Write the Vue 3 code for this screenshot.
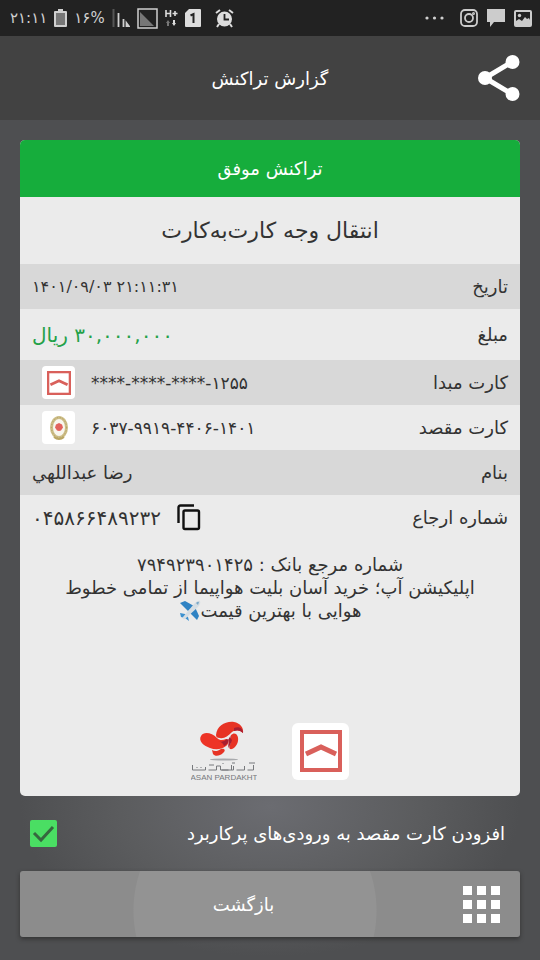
<script setup>
import { ref } from 'vue'

const addToFrequent = ref(true)

const rows = [
  { label: 'تاریخ', value: '۱۴۰۱/۰۹/۰۳ ۲۱:۱۱:۳۱', kind: 'date' },
  { label: 'مبلغ', value: '۳۰,۰۰۰,۰۰۰ ریال', kind: 'amount' },
  { label: 'کارت مبدا', value: '****-****-****-۱۲۵۵', bank: 'tejarat' },
  { label: 'کارت مقصد', value: '۶۰۳۷-۹۹۱۹-۴۴۰۶-۱۴۰۱', bank: 'melli' },
  { label: 'بنام', value: 'رضا عبداللهي', kind: 'name' },
  { label: 'شماره ارجاع', value: '۰۴۵۸۶۶۴۸۹۲۳۲', kind: 'reference', copy: true },
]

const tiles = [0, 1, 2, 3, 4, 5, 6, 7, 8]
</script>

<template>
  <div class="screen" dir="rtl">
    <div class="status" dir="ltr">
      <div class="status-side">
        <span>۲۱:۱۱</span>
        <svg width="13" height="18" viewBox="0 0 13 18">
          <path d="M4 0h5v2h3q1 0 1 1v14q0 1-1 1H1q-1 0-1-1V3q0-1 1-1h3z" fill="#d0d0d0" />
          <path d="M2 4h9v12H2z" fill="#777" />
        </svg>
        <span>۱۶%</span>
        <svg width="18" height="18" viewBox="0 0 18 18">
          <path d="M1.500 0v18" stroke="#555" stroke-width="2" />
          <path d="M6.500 4v14M11.500 10v8M14.500 14l3 4h-3z" stroke="#d0d0d0" fill="#d0d0d0" stroke-width="1.800" />
        </svg>
        <svg width="21" height="21" viewBox="0 0 21 21">
          <rect x="1" y="1" width="19" height="19" fill="#222" stroke="#d0d0d0" stroke-width="1.500" />
          <path d="M3 4l14 14H3z" fill="#777" />
        </svg>
        <svg class="data" width="13" height="18" viewBox="0 0 13 18">
          <path d="M1 1v7M5.500 1v7M1 4.500h4.500M7.500 4.500h5M10 2v5" stroke="#ddd" stroke-width="1.600" fill="none" />
          <path d="M3 11l2 3H4v3H2v-3H1z" fill="#777" />
          <path d="M9 17l-2-3h1v-3h2v3h1z" fill="#ddd" />
        </svg>
        <svg class="sim" width="16" height="18" viewBox="0 0 16 18">
          <path d="M4 0h11q1 0 1 1v16q0 1-1 1H1q-1 0-1-1V4z" fill="#ddd" />
          <path d="M5.500 6.500L8.500 5v9" fill="none" stroke="#222" stroke-width="2" />
        </svg>
        <svg width="19" height="19" viewBox="0 0 19 19">
          <path d="M1 4l4-3M14 1l4 3M4 15l-2 3M15 15l2 3" stroke="#ddd" stroke-width="2" />
          <circle cx="9.500" cy="10" r="7.500" fill="#ddd" />
          <path d="M9.500 5v5.500H14" fill="none" stroke="#222" stroke-width="1.800" />
        </svg>
      </div>
      <div class="status-side notifications">
        <svg width="20" height="4" viewBox="0 0 20 4" fill="#d0d0d0">
          <circle cx="2" cy="2" r="1.600" /><circle cx="9.500" cy="2" r="1.600" /><circle cx="17" cy="2" r="1.600" />
        </svg>
        <svg class="insta" width="18" height="18" viewBox="0 0 18 18" fill="none" stroke="#ccc" stroke-width="1.800">
          <rect x="1" y="1" width="16" height="16" rx="4" />
          <circle cx="9" cy="9" r="4" />
          <circle cx="13.500" cy="4.500" r=".6" />
        </svg>
        <svg width="18" height="18" viewBox="0 0 18 18"><path d="M0 0h18v13H7l-4 5v-5H0z" fill="#ccc" /></svg>
        <svg width="18" height="17" viewBox="0 0 18 17">
          <rect x="1" y="1" width="16" height="15" rx="1" fill="none" stroke="#ccc" stroke-width="2" />
          <circle cx="5.500" cy="5.500" r="1.700" fill="#ccc" />
          <path d="M2 15v-4l3-2 3 2 3-4 2 2 2-1 1 2v5z" fill="#ccc" />
        </svg>
      </div>
    </div>

    <header class="header">
      <button class="share" type="button" aria-label="اشتراک‌گذاری">
        <svg width="42" height="46" viewBox="0 0 42 46">
          <path d="M34 7L7 23l27 16" fill="none" stroke="#fff" stroke-width="5" />
          <circle cx="34.500" cy="7" r="7" fill="#fff" /><circle cx="7" cy="23" r="7" fill="#fff" /><circle cx="34.500" cy="39" r="7" fill="#fff" />
        </svg>
      </button>
      <h1>گزارش تراکنش</h1>
    </header>

    <main class="content">
      <section class="card">
        <div class="result">تراکنش موفق</div>
        <h2>انتقال وجه کارت‌به‌کارت</h2>
        <dl>
          <div v-for="row in rows" :key="row.label" class="row" :class="row.kind">
            <dt>{{ row.label }}</dt>
            <dd>
              <span v-if="row.bank" class="bank">
                <svg v-if="row.bank === 'tejarat'" width="24" height="24" viewBox="0 0 42 42">
                  <rect x="2" y="2" width="38" height="38" fill="none" stroke="#d9605b" stroke-width="4" />
                  <path d="M6 24l15-7 15 7" fill="none" stroke="#d9605b" stroke-width="5" />
                </svg>
                <svg v-else width="20" height="26" viewBox="0 0 20 26">
                  <ellipse cx="10" cy="12.500" rx="7.500" ry="10" fill="#f8f6ee" stroke="#cdbd86" stroke-width="3" />
                  <ellipse cx="10" cy="12.500" rx="7.500" ry="10" fill="none" stroke="#aa9c62" stroke-width="1" stroke-dasharray="1 2" />
                  <path d="M5 22q5 4 10 0" fill="none" stroke="#b9a562" stroke-width="2" />
                  <path d="M10 8l3 1.500 1 3-2 3-2 .5-2-.5-2-3 1-3z" fill="#e2625d" />
                </svg>
              </span>
              <span class="value">{{ row.value }}</span>
              <button v-if="row.copy" class="copy" type="button" aria-label="کپی">
                <svg width="24" height="27" viewBox="0 0 24 27" fill="none" stroke="#111" stroke-width="2.400">
                  <path d="M1.500 19V3.500q0-2 2-2H17" />
                  <rect x="6.500" y="6.500" width="15.500" height="18.500" rx="1.500" />
                </svg>
              </button>
            </dd>
          </div>
        </dl>
        <p class="note">
          شماره مرجع بانک : ۷۹۴۹۲۳۹۰۱۴۲۵<br />
          اپلیکیشن آپ؛ خرید آسان بلیت هواپیما از تمامی خطوط هوایی با بهترین قیمت<svg class="plane" width="22" height="22" viewBox="0 0 22 22">
            <path d="M1 3l5-2 9 5-6 5z" fill="#2f83c4" />
            <path d="M11 13l5-6 4 9-2 4z" fill="#2f83c4" />
            <path d="M1 13l5 1 3 3 1 4-4-3-4-1z" fill="#3d91cf" />
            <path d="M4 17L15 4q4-4 6-3 1 2-2 6L6 19q-3 1-2-2z" fill="#d5dde3" />
            <path d="M17 3q2-2 3-1l-1 3z" fill="#7aa7c7" />
          </svg>
        </p>
        <div class="logos">
          <span class="logo-tile">
            <svg width="42" height="42" viewBox="0 0 42 42">
              <rect x="2" y="2" width="38" height="38" fill="#fff" stroke="#d9605b" stroke-width="4" />
              <path d="M6 24l15-7 15 7" fill="none" stroke="#d9605b" stroke-width="5" />
            </svg>
          </span>
          <svg class="asan" width="66" height="60" viewBox="0 0 66 60">
            <path d="M25 14C26 5 34 0 43 1c6 1 10 6 9 11-4-4-8-3-11-1-4 4-8 7-12 6-3 0-4-1-4-3z" fill="#e73324" />
            <path d="M43 7c5-2 9 0 9 5-3-3-6-3-9-2z" fill="#a81f31" />
            <path d="M10 15c3-5 11-3 16 2 3 3 6 2 9 1 4 0 3 5 0 7-5 4-11 4-16 2-6-2-12-7-9-12z" fill="#ed3426" />
            <path d="M27 20q5 2 9-2c3 2 0 6-3 7-1-3-3-4-6-5z" fill="#a81f31" />
            <path d="M40 14c4-4 8 0 7 6-1 5-5 9-8 8-2-2 1-5 1-8z" fill="#e73324" />
            <path d="M40 14c-1 2 0 4 1 5-1 4-3 6-3 8-2-3 1-6-1-8z" fill="#a81f31" />
            <path d="M21 29c3 2 6 1 9-1 4-1 5 2 2 4-3 3-8 4-10 1z" fill="#e73324" />
            <ellipse cx="33" cy="38.500" rx="14" ry="1" fill="#a8aaad" />
            <path d="M1.500 44v5h13v-3m3 3h8v-4h4v4h8m3-5v5m-10 0h12v-4m3 4h8v-4m3 4h6v-5M6 46v1m4-1v1m8-3h5m9-2v1m9-1h3m14 0h6" fill="none" stroke="#77797c" stroke-width="1" />
            <text x="33" y="59" text-anchor="middle" direction="ltr">ASAN PARDAKHT</text>
          </svg>
        </div>
      </section>

      <label class="frequent">
        <span>افزودن کارت مقصد به ورودی‌های پرکاربرد</span>
        <span class="check">
          <input v-model="addToFrequent" type="checkbox" />
          <svg v-if="addToFrequent" width="27" height="27" viewBox="0 0 27 27">
            <path d="M4 13l7 7L23 7" fill="none" stroke="#36673f" stroke-width="3" />
          </svg>
        </span>
      </label>

      <button class="back" type="button">
        <svg width="37" height="37" viewBox="0 0 37 37" fill="#fff">
          <rect v-for="t in tiles" :key="t" :x="(t % 3) * 14" :y="Math.floor(t / 3) * 14" width="9" height="9" />
        </svg>
        <span>بازگشت</span>
      </button>
    </main>
  </div>
</template>

<style>
body {
  margin: 0;
  background: #4e4f51;
}
</style>

<style scoped>
.screen {
  display: flex;
  flex-direction: column;
  min-height: 100vh;
  font-family: "DejaVu Sans", sans-serif;
  font-size: 18px;
  color: #333;
  background: radial-gradient(ellipse 250px 150px at 50% 84%, #6b6c71 0, #5b5c5e 60%, #4e4f51 100%);
}
svg {
  display: block;
  flex: none;
}
button {
  font: inherit;
  border: 0;
  padding: 0;
  background: none;
  color: inherit;
  cursor: pointer;
}
.status {
  display: flex;
  align-items: center;
  justify-content: space-between;
  height: 36px;
  padding: 0 8px 0 10px;
  background: #222;
  color: #d0d0d0;
  font-size: 15px;
}
.status-side {
  display: flex;
  align-items: center;
  gap: 7px;
}
.sim {
  margin-right: 7px;
}
.notifications {
  gap: 9px;
}
.insta {
  margin-left: 6px;
}
.header {
  display: grid;
  grid-template-columns: 42px 1fr 42px;
  align-items: center;
  height: 84px;
  padding: 0 20px;
  background: #424242;
  color: #fff;
}
h1 {
  margin: 0;
  font-size: 18px;
  font-weight: 400;
  text-align: center;
}
.content {
  display: flex;
  flex: 1;
  flex-direction: column;
  padding: 20px 20px 23px;
}
.card {
  display: flex;
  flex: 1;
  flex-direction: column;
  overflow: hidden;
  border-radius: 5px;
  background: #ebebeb;
}
.result {
  height: 57px;
  line-height: 57px;
  text-align: center;
  background: #16ad3c;
  color: #fff;
}
h2 {
  margin: 0;
  height: 67px;
  line-height: 67px;
  font-size: 22px;
  font-weight: 400;
  text-align: center;
}
dl {
  margin: 0;
}
.row {
  display: flex;
  align-items: center;
  justify-content: space-between;
  height: 45px;
  padding: 0 12px;
}
.row:nth-child(odd) {
  background: #d8d8d8;
}
.row.amount {
  height: 51px;
}
dd {
  display: flex;
  align-items: center;
  direction: ltr;
  margin: 0;
  font-size: 17px;
}
.date .value {
  font-size: 16px;
}
.amount .value,
.name .value {
  direction: rtl;
}
.amount .value {
  font-size: 20px;
  color: #24a148;
}
.name .value {
  font-size: 18px;
}
.reference .value {
  font-size: 20px;
}
.bank {
  display: flex;
  align-items: center;
  justify-content: center;
  width: 33px;
  height: 33px;
  margin: 0 16px 0 10px;
  border-radius: 4px;
  background: #fff;
}
.copy {
  margin-left: 16px;
}
.note {
  margin: 13px 28px 0;
  line-height: 23px;
  text-align: center;
}
.plane {
  display: inline-block;
  vertical-align: -5px;
}
.logos {
  display: flex;
  align-items: center;
  justify-content: center;
  gap: 35px;
  margin-top: auto;
  padding: 16px 0 15px;
}
.logo-tile {
  display: flex;
  align-items: center;
  justify-content: center;
  width: 57px;
  height: 57px;
  border-radius: 6px;
  background: #fff;
}
.asan text {
  font-family: "Liberation Sans", sans-serif;
  font-size: 8px;
  fill: #77797c;
}
.frequent {
  display: flex;
  align-items: center;
  justify-content: space-between;
  height: 75px;
  padding: 0 15px 0 10px;
  color: #fff;
}
.check {
  display: grid;
}
.check input,
.check svg {
  grid-area: 1 / 1;
}
.check svg {
  pointer-events: none;
}
.check input {
  appearance: none;
  width: 27px;
  height: 27px;
  margin: 0;
  border-radius: 2px;
  background: #4ade63;
}
.back {
  display: flex;
  align-items: center;
  height: 66px;
  padding: 0 20px 0 4px;
  border-radius: 3px;
  background: radial-gradient(circle at 47% 60%, #939393 0, #939393 121px, #8c8c8c 122px);
  box-shadow: 0 2px 4px #333;
  color: #fff;
}
.back span {
  flex: 1;
}
</style>
